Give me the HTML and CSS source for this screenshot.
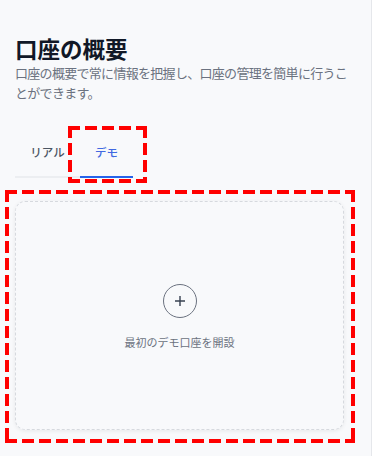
FILE: index.html
```html
<!DOCTYPE html>
<html>
    <head>
        <link rel="stylesheet" href="styles.css">
    </head>
    <body>
        <div class="panel">
            <h1 class="title">口座の概要</h1>
            <p class="subtitle">口座の概要で常に情報を把握し、口座の管理を簡単に行うことができます。</p>

            <ul class="tabs">
                <li class="tab">リアル</li>
                <li class="tab active">デモ<span class="mark tabMark"></span></li>
            </ul>

            <div class="emptyCard">
                <span class="mark cardMark"></span>
                <div class="addCircle">
                    <svg width="12" height="12" viewBox="0 0 12 12">
                        <path d="M6 1v10M1 6h10" stroke="#374151" stroke-width="1.4" fill="none"/>
                    </svg>
                </div>
                <p class="emptyText">最初のデモ口座を開設</p>
            </div>
        </div>
    </body>
</html>
```

FILE: styles.css
```css
body {
    margin: 0;
    background: #ffffff;
    font-family: "Noto Sans CJK JP", "Noto Sans", sans-serif;
}

.panel {
    width: 372px;
    height: 456px;
    box-sizing: border-box;
    padding: 33px 15px 0 15px;
    background: #f8f9fb;
    border-right: 1px solid #e5e7eb;
}

.title {
    margin: 0;
    font-size: 22.5px;
    line-height: 30px;
    font-weight: bold;
    color: #111827;
}

.subtitle {
    margin: 0;
    font-size: 13px;
    letter-spacing: -0.7px;
    line-height: 20px;
    color: #6b7280;
}

.tabs {
    list-style: none;
    margin: 25px 0 0 0;
    padding: 0;
    display: flex;
}

.tab {
    position: relative;
    padding: 14px 0;
    font-size: 11.5px;
    line-height: 20px;
    font-weight: 500;
    color: #4b5563;
    text-align: center;
    border-bottom: 2px solid #eceef1;
    width: 65px;
}

.tab.active {
    width: 53px;
    color: #4169e1;
    border-bottom-color: #2563eb;
}

.emptyCard {
    position: relative;
    margin: 23px 12px 0 0;
    height: 229px;
    box-sizing: border-box;
    padding-top: 82px;
    border: 1px dashed #d6d9de;
    border-radius: 10px;
    box-shadow: 0 1px 4px rgba(0, 0, 0, 0.07);
    display: flex;
    flex-direction: column;
    align-items: center;
}

.addCircle {
    width: 34px;
    height: 34px;
    box-sizing: border-box;
    border: 1px solid #6b7280;
    border-radius: 50%;
    display: flex;
    align-items: center;
    justify-content: center;
}

.emptyText {
    margin: 16px 0 0 0;
    font-size: 11px;
    line-height: 16px;
    color: #6b7280;
}

/* annotation boxes: 4px red dashes, 12px on / 5px off */
.mark {
    position: absolute;
    background:
        repeating-linear-gradient(90deg, #ff0000 0 12px, transparent 12px 17px) left top / 100% 4px no-repeat,
        repeating-linear-gradient(90deg, #ff0000 0 12px, transparent 12px 17px) left bottom / 100% 4px no-repeat,
        repeating-linear-gradient(180deg, #ff0000 0 12px, transparent 12px 17px) left top / 4px 100% no-repeat,
        repeating-linear-gradient(180deg, #ff0000 0 12px, transparent 12px 17px) right top / 4px 100% no-repeat;
}

.tabMark {
    left: -12px;
    right: -14px;
    top: -2px;
    bottom: -7px;
}

.cardMark {
    left: -11px;
    right: -12px;
    top: -12px;
    bottom: -14px;
}
```
